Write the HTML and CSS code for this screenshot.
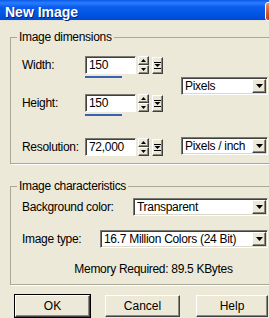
FILE: index.html
```html
<!DOCTYPE html>
<html lang="en">
<head>
  <meta charset="UTF-8" />
  <title>New Image</title>
  <link rel="stylesheet" href="styles.css">
</head>
<body>
<div class="dialog">
  <div class="titlebar">
    <span class="title">New Image</span>
    <span class="close"></span>
  </div>

  <div class="content">
    <fieldset class="group group-dims">
      <legend>Image dimensions</legend>
      <div class="dims-cols">
        <div class="spin-rows">
          <div class="row row-width">
            <label class="lbl">Width:</label>
            <div class="spin-wrap">
              <div class="spinbox">
                <span class="num">150</span>
                <span class="spins">
                  <span class="spin"><svg width="5" height="3" viewBox="0 0 5 3"><polygon points="2.5,0 5,3 0,3" /></svg></span>
                  <span class="spin"><svg width="5" height="3" viewBox="0 0 5 3"><polygon points="0,0 5,0 2.5,3" /></svg></span>
                </span>
                <span class="popup"><svg width="7" height="7" viewBox="0 0 7 7"><rect x="0" y="0" width="7" height="1" /><polygon points="0.5,2 6.5,2 3.5,5" /><rect x="0" y="6" width="7" height="1" /></svg></span>
              </div>
              <div class="bar" style="width:37px"></div>
            </div>
          </div>

          <div class="row row-height">
            <label class="lbl">Height:</label>
            <div class="spin-wrap">
              <div class="spinbox">
                <span class="num">150</span>
                <span class="spins">
                  <span class="spin"><svg width="5" height="3" viewBox="0 0 5 3"><polygon points="2.5,0 5,3 0,3" /></svg></span>
                  <span class="spin"><svg width="5" height="3" viewBox="0 0 5 3"><polygon points="0,0 5,0 2.5,3" /></svg></span>
                </span>
                <span class="popup"><svg width="7" height="7" viewBox="0 0 7 7"><rect x="0" y="0" width="7" height="1" /><polygon points="0.5,2 6.5,2 3.5,5" /><rect x="0" y="6" width="7" height="1" /></svg></span>
              </div>
              <div class="bar" style="width:37px"></div>
            </div>
          </div>

          <div class="row row-res">
            <label class="lbl">Resolution:</label>
            <div class="spin-wrap">
              <div class="spinbox">
                <span class="num">72,000</span>
                <span class="spins">
                  <span class="spin"><svg width="5" height="3" viewBox="0 0 5 3"><polygon points="2.5,0 5,3 0,3" /></svg></span>
                  <span class="spin"><svg width="5" height="3" viewBox="0 0 5 3"><polygon points="0,0 5,0 2.5,3" /></svg></span>
                </span>
                <span class="popup"><svg width="7" height="7" viewBox="0 0 7 7"><rect x="0" y="0" width="7" height="1" /><polygon points="0.5,2 6.5,2 3.5,5" /><rect x="0" y="6" width="7" height="1" /></svg></span>
              </div>
            </div>
          </div>
        </div>

        <div class="units">
          <div class="select sel-pixels">
            <span class="sel-text">Pixels</span>
            <span class="drop"><svg width="7" height="4" viewBox="0 0 7 4"><polygon points="0,0 7,0 3.5,4" /></svg></span>
          </div>
          <div class="select sel-ppi">
            <span class="sel-text">Pixels / inch</span>
            <span class="drop"><svg width="7" height="4" viewBox="0 0 7 4"><polygon points="0,0 7,0 3.5,4" /></svg></span>
          </div>
        </div>
      </div>
    </fieldset>

    <fieldset class="group group-chars">
      <legend>Image characteristics</legend>
      <div class="row row-bg">
        <label class="lbl lbl-bg">Background color:</label>
        <div class="select sel-bg">
          <span class="sel-text">Transparent</span>
          <span class="drop"><svg width="7" height="4" viewBox="0 0 7 4"><polygon points="0,0 7,0 3.5,4" /></svg></span>
        </div>
      </div>
      <div class="row row-type">
        <label class="lbl lbl-type">Image type:</label>
        <div class="select sel-type">
          <span class="sel-text">16.7 Million Colors (24 Bit)</span>
          <span class="drop"><svg width="7" height="4" viewBox="0 0 7 4"><polygon points="0,0 7,0 3.5,4" /></svg></span>
        </div>
      </div>
      <p class="memory">Memory Required: 89.5 KBytes</p>
    </fieldset>

    <div class="buttons">
      <button class="btn btn-ok">OK</button>
      <button class="btn">Cancel</button>
      <button class="btn btn-help">Help</button>
    </div>
  </div>
</div>
</body>
</html>
```

FILE: styles.css
```css
body {
  margin: 0;
  background: #ece9d8;
  font-family: 'Liberation Sans', Arial, sans-serif;
  font-size: 12px;
  letter-spacing: -0.3px;
  color: #000;
  overflow: hidden;
}
.dialog {
  width: 307px;
  height: 318px;
}
.titlebar {
  display: flex;
  align-items: center;
  justify-content: space-between;
  height: 20px;
  padding: 0 21px 0 5px;
  background: linear-gradient(to bottom, #0a5ae8 0, #2c7cff 3px, #0a5ded 7px, #0055e5 14px, #0048d2 20px);
  border-bottom: 1px solid #e4e2d6;
}
.title {
  color: #fff;
  font-weight: bold;
  font-size: 14px;
  letter-spacing: 0;
  padding-top: 3px;
  text-shadow: 1px 1px 0 #0a1e78;
}
.close {
  width: 19px;
  height: 17px;
  margin-top: 2px;
  border: 1px solid #fff;
  border-radius: 3px;
  background: linear-gradient(to bottom, #e88a66, #d8512a 60%, #c4401c);
}
.content {
  padding: 9px 0 0 10px;
}
.group {
  margin: 0;
  width: 287px;
  box-sizing: border-box;
  border: 1px solid #a9a898;
  box-shadow: 1px 1px 0 #fff;
  padding: 0 0 0 11px;
}
legend {
  padding: 0 2px;
  margin-left: -5px;
  line-height: 14px;
}
.group-dims {
  padding-top: 12px;
  padding-bottom: 7px;
}
.dims-cols {
  display: flex;
  align-items: flex-start;
}
.row {
  display: flex;
}
.lbl {
  width: 63px;
  height: 18px;
  line-height: 18px;
  flex-shrink: 0;
}
.row-height {
  margin-top: 16px;
}
.row-res {
  margin-top: 22px;
}
.spinbox {
  display: flex;
  align-items: center;
  width: 78px;
  height: 18px;
}
.num {
  width: 51px;
  height: 18px;
  box-sizing: border-box;
  background: #fff;
  border: 1px solid;
  border-color: #7a7a70 #fff #fff #7a7a70;
  box-shadow: inset 1px 1px 0 #404040;
  padding: 0 0 0 3px;
  line-height: 16px;
}
.spins {
  display: flex;
  flex-direction: column;
  margin-left: 2px;
}
.spin, .popup, .drop {
  display: flex;
  align-items: center;
  justify-content: center;
  box-sizing: border-box;
  background: #ece9d8;
  border: 1px solid;
  border-color: #fff #404040 #404040 #fff;
  box-shadow: inset -1px -1px 0 #8c8a80;
}
.spin {
  width: 11px;
  height: 9px;
}
.popup {
  width: 11px;
  height: 17px;
  margin-left: 3px;
}
.bar {
  height: 2px;
  margin-top: 2px;
  background: #3a62b2;
}
.units {
  margin-left: 18px;
}
.select {
  display: flex;
  align-items: center;
  height: 18px;
  box-sizing: border-box;
  background: #fff;
  border: 1px solid;
  border-color: #7a7a70 #fff #fff #7a7a70;
  box-shadow: inset 1px 1px 0 #404040, inset -1px -1px 0 #dcd9cc;
  padding: 0 1px 0 3px;
}
.sel-text {
  flex: 1;
  white-space: nowrap;
}
.drop {
  width: 14px;
  height: 14px;
}
.sel-pixels {
  width: 87px;
  margin-top: 21px;
}
.sel-ppi {
  width: 87px;
  margin-top: 42px;
}
.group-chars {
  margin-top: 15px;
  padding-top: 5px;
  padding-bottom: 8px;
}
.lbl-bg {
  width: 111px;
}
.lbl-type {
  width: 78px;
}
.sel-bg {
  width: 135px;
}
.row-type {
  margin-top: 14px;
}
.sel-type {
  width: 168px;
}
.memory {
  margin: 14px 0 0 -11px;
  line-height: 14px;
  text-align: center;
}
.buttons {
  display: flex;
  gap: 15px;
  margin: 10px 0 0 5px;
}
.btn {
  width: 75px;
  height: 22px;
  font-family: 'Liberation Sans', Arial, sans-serif;
  font-size: 12px;
  color: #000;
  background: #ece9d8;
  border: 1px solid;
  border-color: #fff #404040 #404040 #fff;
  box-shadow: inset -1px -1px 0 #8c8a80;
  padding: 0;
}
.btn-ok {
  outline: 1px solid #000;
}
.btn-help {
  width: 72px;
  margin-left: 1px;
}
```
